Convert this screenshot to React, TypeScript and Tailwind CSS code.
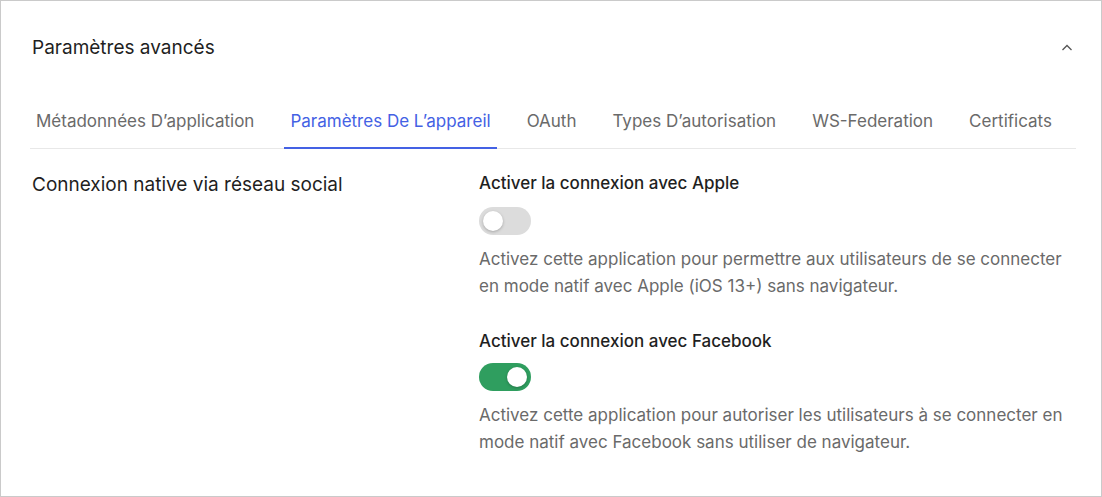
import React, { useState } from "react"

const tabs = [
  "Métadonnées D’application",
  "Paramètres De L’appareil",
  "OAuth",
  "Types D’autorisation",
  "WS-Federation",
  "Certificats",
]

function Toggle({ on, onChange }: { on: boolean; onChange: () => void }) {
  return (
    <button
      type="button"
      onClick={onChange}
      className={`relative block h-[28px] w-[52px] rounded-full ${on ? "bg-[#2f9e5f]" : "bg-[#dcdcdc]"}`}>
      <span
        className={`absolute top-[4px] h-[20px] w-[20px] rounded-full bg-white shadow-[0_1px_3px_rgba(0,0,0,0.25)] ${on ? "left-[28px]" : "left-[4px]"}`}
      />
    </button>
  )
}

export default function App() {
  const [active, setActive] = useState(1)
  const [apple, setApple] = useState(false)
  const [facebook, setFacebook] = useState(true)

  return (
    <div
      className="h-[497px] w-[1102px] border border-[#cacaca] bg-white text-[#1f1f1f]"
      style={{ fontFamily: "Inter, 'Noto Sans', sans-serif" }}>
      {/* <--- header ---> */}
      <div className="flex items-center justify-between pl-[31px] pr-[27px] pt-[35px]">
        <h2 className="text-[19px] leading-[24px]">Paramètres avancés</h2>
        <svg width="12" height="12" viewBox="0 0 12 12" fill="none" className="mr-[1px] text-[#555]">
          <path d="M1.5 8L6 3.5L10.5 8" stroke="currentColor" strokeWidth="1.3" />
        </svg>
      </div>

      {/* <--- tabs ---> */}
      <div className="ml-[29px] mr-[25px] mt-[49px] flex gap-[24px] border-b border-[#e8e8e8]">
        {tabs.map((t, i) => (
          <button
            key={t}
            onClick={() => setActive(i)}
            className={`-mb-px border-b-2 px-[6px] pb-[15px] pt-[2px] text-[17px] leading-[21px] ${
              i === active ? "border-[#4461e4] text-[#4461e4]" : "border-transparent text-[#6a6a6a]"
            }`}>
            {t}
          </button>
        ))}
      </div>

      {/* <--- body ---> */}
      <section className="mx-[31px] mt-[24px] flex">
        <h3 className="w-[447px] text-[19px] leading-[24px]">Connexion native via réseau social</h3>
        <div className="-mt-px flex-1">
          <div className="text-[17px] font-medium leading-[22px]">Activer la connexion avec Apple</div>
          <div className="mt-[13px]">
            <Toggle on={apple} onChange={() => setApple(!apple)} />
          </div>
          <p className="mt-[11px] text-[17px] leading-[27px] text-[#6a6a6a]">
            Activez cette application pour permettre aux utilisateurs de se connecter
            <br />
            en mode natif avec Apple (iOS 13+) sans navigateur.
          </p>

          <div className="mt-[30px] text-[17px] font-medium leading-[22px]">
            Activer la connexion avec Facebook
          </div>
          <div className="mt-[11px]">
            <Toggle on={facebook} onChange={() => setFacebook(!facebook)} />
          </div>
          <p className="mt-[11px] text-[17px] leading-[27px] text-[#6a6a6a]">
            Activez cette application pour autoriser les utilisateurs à se connecter en
            <br />
            mode natif avec Facebook sans utiliser de navigateur.
          </p>
        </div>
      </section>
    </div>
  )
}
